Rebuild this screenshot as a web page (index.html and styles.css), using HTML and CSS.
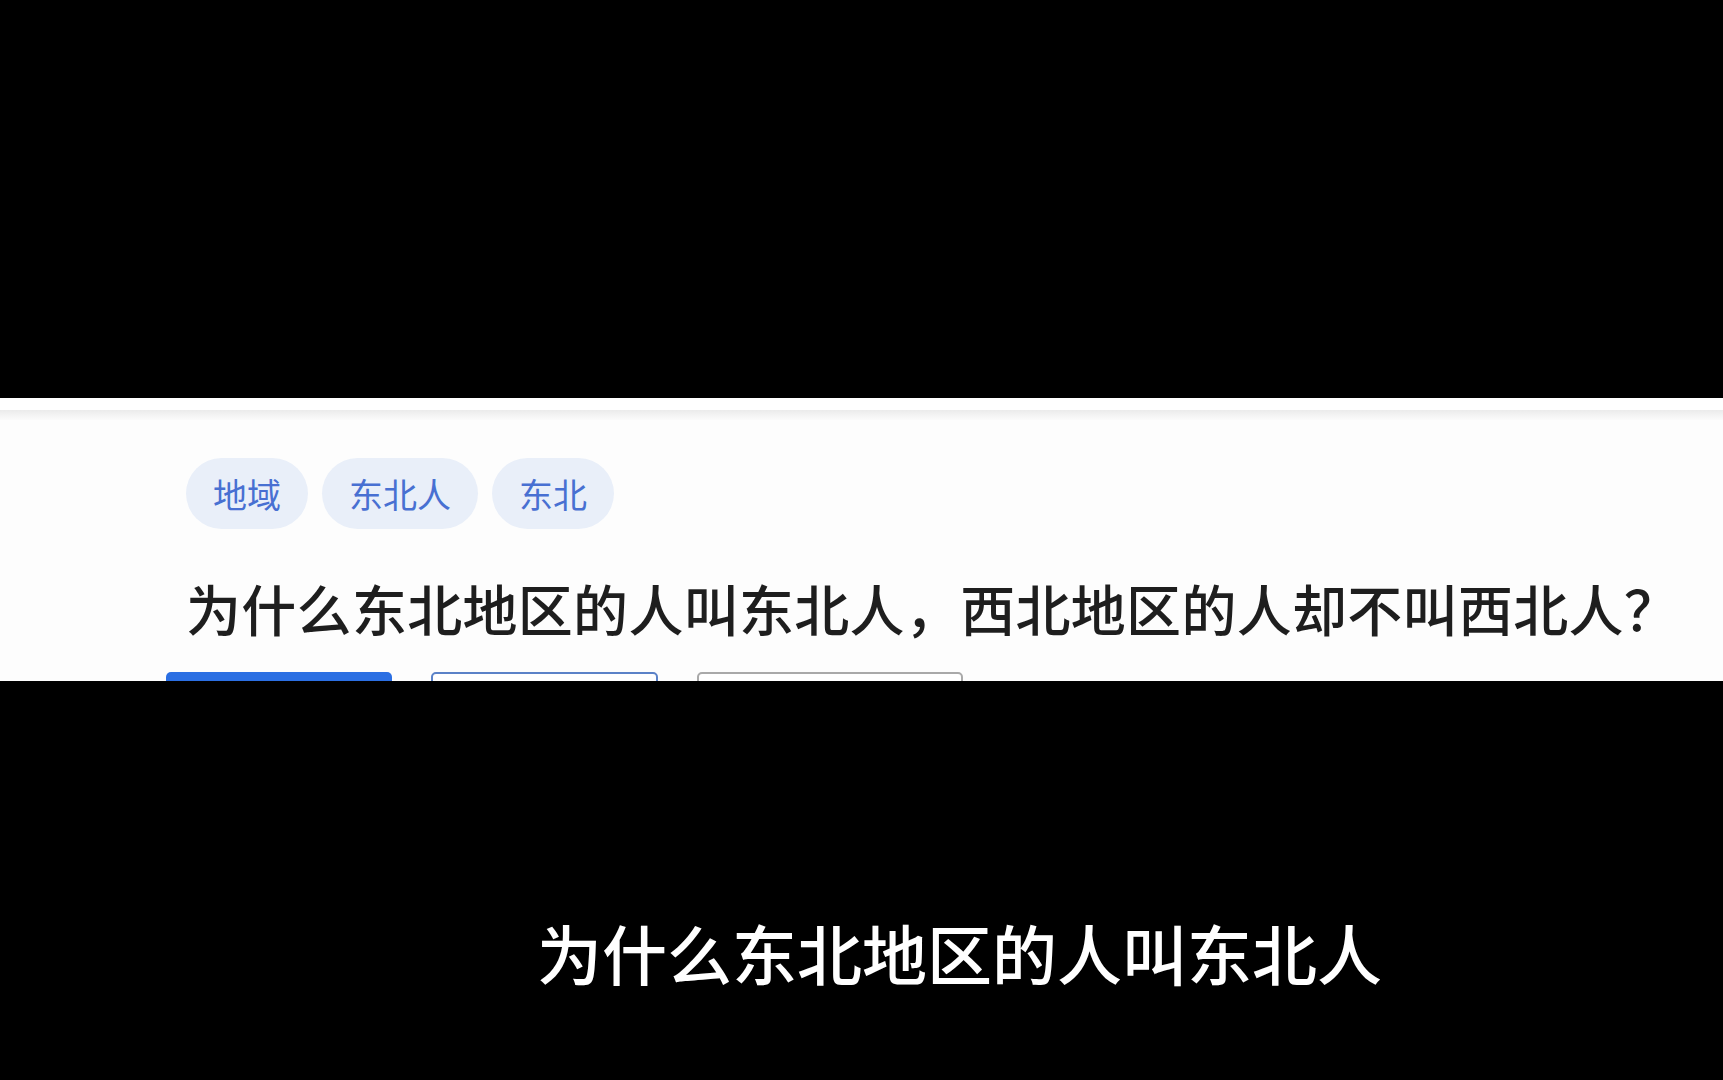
FILE: index.html
```html
<!DOCTYPE html>
<html lang="zh-CN">
<head>
<meta charset="utf-8">
<title>为什么东北地区的人叫东北人</title>
<link rel="stylesheet" href="styles.css">
</head>
<body>
<div class="top-bar"></div>
<div class="panel">
  <div class="header-strip"></div>
  <div class="header-shadow"></div>
  <div class="content">
    <div class="tags">
      <span class="tag">地域</span>
      <span class="tag">东北人</span>
      <span class="tag">东北</span>
    </div>
    <h1 class="title">为什么东北地区的人叫东北人，西北地区的人却不叫西北人？</h1>
    <div class="actions">
      <div class="btn btn-primary"></div>
      <div class="btn btn-outline"></div>
      <div class="btn btn-gray"></div>
    </div>
  </div>
</div>
<div class="bottom-bar">
  <p class="subtitle">为什么东北地区的人叫东北人</p>
</div>
</body>
</html>
```
FILE: styles.css
```css
html, body {
  margin: 0;
  padding: 0;
  background: #000;
  width: 1723px;
  height: 1080px;
  overflow: hidden;
  font-family: "Noto Sans CJK SC", "Noto Sans", sans-serif;
}
.top-bar {
  height: 398px;
  background: #000;
}
.panel {
  height: 283px;
  background: #fdfdfd;
  overflow: hidden;
}
.header-strip {
  height: 12px;
  background: #ffffff;
}
.header-shadow {
  height: 10px;
  background: linear-gradient(#ebebeb, #fbfbfb);
}
.content {
  padding-left: 186px;
}
.tags {
  display: flex;
  gap: 14px;
  margin-top: 38px;
}
.tag {
  display: flex;
  align-items: center;
  height: 71px;
  padding: 0 27px;
  border-radius: 36px;
  background: #e9eff9;
  color: #4870d2;
  font-size: 34px;
  line-height: 1;
}
.title {
  margin: 45px 0 0 0;
  font-size: 55px;
  line-height: 66px;
  font-weight: 500;
  color: #1e1e1e;
  white-space: nowrap;
  letter-spacing: 0.3px;
}
.actions {
  display: flex;
  gap: 39px;
  margin: 32px 0 0 -20px;
}
.btn {
  height: 40px;
  border-radius: 5px;
  box-sizing: border-box;
}
.btn-primary {
  width: 226px;
  background: #2b6fe3;
}
.btn-outline {
  width: 227px;
  border: 2px solid #5b82c8;
  background: #fff;
}
.btn-gray {
  width: 266px;
  border: 2px solid #a9a9a9;
  background: #fff;
}
.bottom-bar {
  height: 399px;
  background: #000;
  overflow: hidden;
}
.subtitle {
  margin: 0;
  padding: 236px 0 0 537px;
  color: #fff;
  font-size: 65px;
  line-height: 70px;
  font-weight: 500;
  white-space: nowrap;
}
```
